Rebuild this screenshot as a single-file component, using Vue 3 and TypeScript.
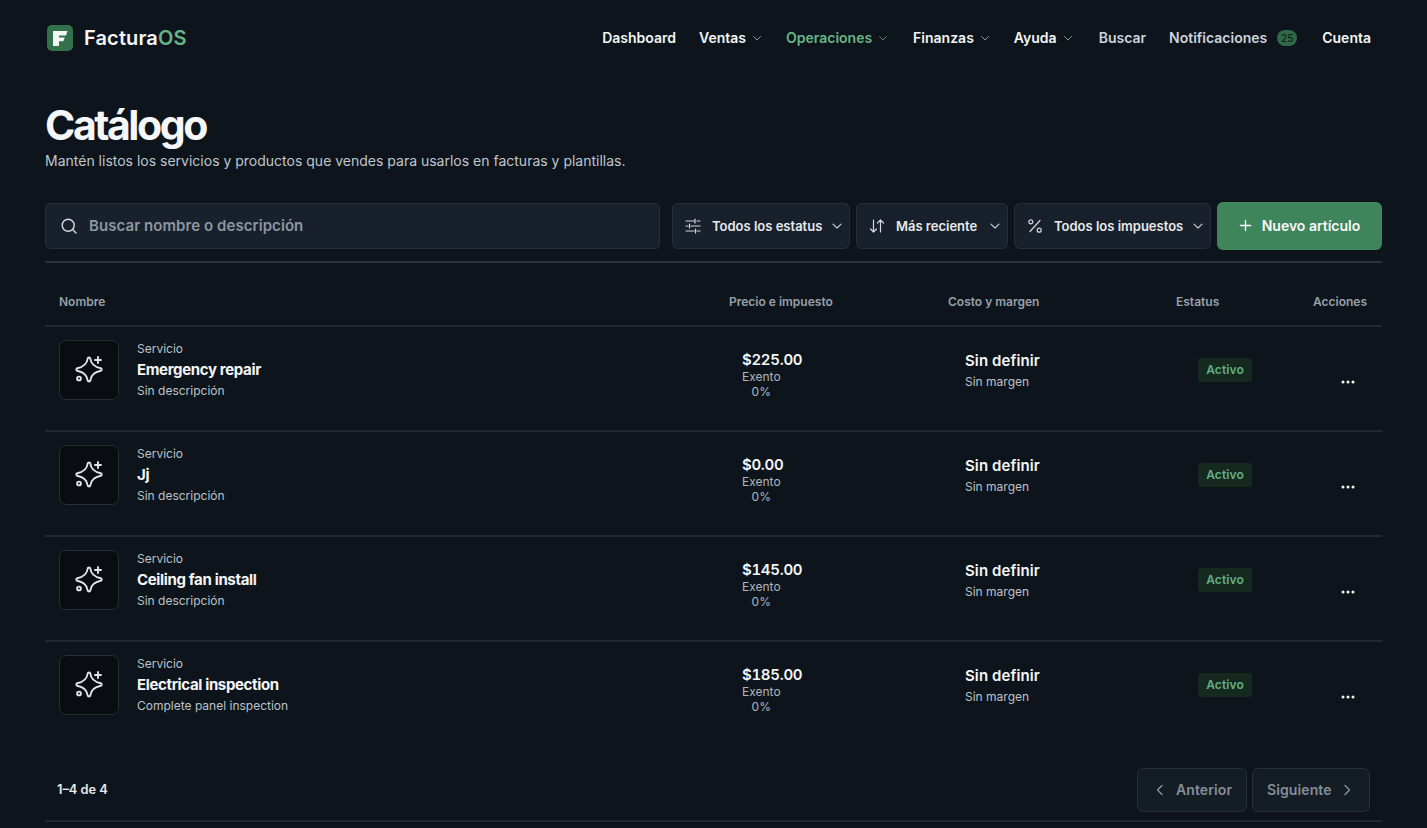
<script setup lang="ts">
interface Item { name: string; desc: string; price: string }
const items: Item[] = [
  { name: 'Emergency repair', desc: 'Sin descripción', price: '$225.00' },
  { name: 'Jj', desc: 'Sin descripción', price: '$0.00' },
  { name: 'Ceiling fan install', desc: 'Sin descripción', price: '$145.00' },
  { name: 'Electrical inspection', desc: 'Complete panel inspection', price: '$185.00' },
]
</script>

<template>
  <div class="page">
    <header class="nav">
      <div class="brand">
        <span class="logo">
          <svg width="20" height="20" viewBox="0 0 20 20"><path d="M3 3H17.500L16 7.500H9V9.500H14.800L13.300 13.300H9V18H3Z" fill="#f4f6f5"/></svg>
        </span>
        <span class="brand-text">Factura<em>OS</em></span>
      </div>
      <nav class="links">
        <a class="w">Dashboard</a>
        <a class="w"><span>Ventas</span><svg class="c c-v" viewBox="0 0 10 10"><path d="M1.500 3.500 5 7l3.500-3.500"/></svg></a>
        <a class="g"><span>Operaciones</span><svg class="c" viewBox="0 0 10 10"><path d="M1.500 3.500 5 7l3.500-3.500"/></svg></a>
        <a class="w"><span>Finanzas</span><svg class="c c-f" viewBox="0 0 10 10"><path d="M1.500 3.500 5 7l3.500-3.500"/></svg></a>
        <a class="w"><span>Ayuda</span><svg class="c c-a" viewBox="0 0 10 10"><path d="M1.500 3.500 5 7l3.500-3.500"/></svg></a>
        <a class="m">Buscar</a>
        <a class="m notif">Notificaciones<span class="pill">25</span></a>
        <a class="w cuenta">Cuenta</a>
      </nav>
    </header>

    <h1>Catálogo</h1>
    <p class="sub">Mantén listos los servicios y productos que vendes para usarlos en facturas y plantillas.</p>

    <div class="toolbar">
      <div class="search">
        <svg width="18" height="18" viewBox="0 0 18 18" fill="none" stroke="#d3d9df" stroke-width="1.400" stroke-linecap="round"><circle cx="8.200" cy="8.200" r="6"/><path d="m12.600 12.600 3.400 3.400"/></svg>
        <span>Buscar nombre o descripción</span>
      </div>
      <button class="sel s1">
        <svg class="ic" viewBox="0 0 16 16"><path d="M1 3h8M12 3h3M10 1v4M1 8h2M6 8h9M4.500 6v4M1 13h8M12 13h3M10.500 11v4"/></svg>
        <span class="lbl">Todos los estatus</span>
        <svg class="cs" viewBox="0 0 10 10"><path d="M1 3.200 5 7l4-3.800"/></svg>
      </button>
      <button class="sel s2">
        <svg class="ic" viewBox="0 0 16 16"><path d="M4.500 2v12M1.500 11l3 3 3-3M11.500 14V2M8.500 5l3-3 3 3"/></svg>
        <span class="lbl">Más reciente</span>
        <svg class="cs" viewBox="0 0 10 10"><path d="M1 3.200 5 7l4-3.800"/></svg>
      </button>
      <button class="sel s3">
        <svg class="ic" viewBox="0 0 16 16"><path d="M13 2.500 3 13.500"/><circle cx="3.800" cy="3.800" r="2"/><circle cx="12.200" cy="12.200" r="2"/></svg>
        <span class="lbl">Todos los impuestos</span>
        <svg class="cs" viewBox="0 0 10 10"><path d="M1 3.200 5 7l4-3.800"/></svg>
      </button>
      <button class="new">
        <svg width="13" height="13" viewBox="0 0 14 14" fill="none" stroke="#fff" stroke-width="1.500" stroke-linecap="round"><path d="M7 1.500v11M1.500 7h11"/></svg>
        Nuevo artículo
      </button>
    </div>

    <div class="grid head">
      <div>Nombre</div>
      <div>Precio e impuesto</div>
      <div>Costo y margen</div>
      <div>Estatus</div>
      <div class="right">Acciones</div>
    </div>

    <div v-for="it in items" :key="it.name" class="grid row">
      <div class="name-cell">
        <span class="thumb">
          <svg width="40" height="40" viewBox="0 0 40 40" fill="none" stroke="#e2e5e8" stroke-width="1.900" stroke-linecap="round" stroke-linejoin="round">
            <path d="M18.700 8.500C18.900 7.200 21.100 7.200 21.300 8.500C22 14.500 25.500 17 31.800 18.200C33 18.500 33 20.500 31.800 20.800C25.500 22 22 24.500 21.300 30.500C21.100 31.800 18.900 31.800 18.700 30.500C18 24.500 14.500 22 8.200 20.800C7 20.500 7 18.500 8.200 18.200C14.500 17 18 14.500 18.700 8.500Z"/>
            <path d="M29 7v6M26 10h6"/>
            <circle cx="10" cy="28.500" r="1.900"/>
          </svg>
        </span>
        <div class="name-text">
          <div class="small">Servicio</div>
          <div class="title">{{ it.name }}</div>
          <div class="small">{{ it.desc }}</div>
        </div>
      </div>
      <div class="price">
        <div class="strong amount">{{ it.price }}</div>
        <div class="tax"><div>Exento</div><div>0%</div></div>
      </div>
      <div class="cost">
        <div class="strong sd">Sin definir</div>
        <div class="small">Sin margen</div>
      </div>
      <div class="status"><span class="badge">Activo</span></div>
      <div class="actions">
        <svg width="14" height="4" viewBox="0 0 14 4" fill="#f2f4f5"><circle cx="2" cy="2" r="1.500"/><circle cx="7" cy="2" r="1.500"/><circle cx="12" cy="2" r="1.500"/></svg>
      </div>
    </div>

    <footer class="foot">
      <span class="count">1–4 de 4</span>
      <div class="pager">
        <button class="pg p1"><svg class="ch" viewBox="0 0 10 12"><path d="M7 1.500 2.500 6 7 10.500"/></svg>Anterior</button>
        <button class="pg p2">Siguiente<svg class="ch" viewBox="0 0 10 12"><path d="M3 1.500 7.500 6 3 10.500"/></svg></button>
      </div>
    </footer>
  </div>
</template>

<style>
html, body { margin: 0; background: #0d141b; }
</style>

<style scoped>
.page {
  height: 828px;
  box-sizing: border-box;
  padding: 0 45px;
  overflow: hidden;
  background: #0d141b;
  color: #f3f5f6;
  font-family: Inter, "Liberation Sans", sans-serif;
}
.nav { height: 75px; display: flex; align-items: center; justify-content: space-between; padding: 0 11px 0 2px; }
.brand { display: flex; align-items: center; gap: 11px; }
.logo { width: 26px; height: 26px; border-radius: 5px; background: #33704c; display: flex; align-items: center; justify-content: center; }
.brand-text { font-size: 20px; font-weight: 600; letter-spacing: 0.130px; color: #f3f5f6; }
.brand-text em { font-style: normal; color: #67b587; }
.links { display: flex; align-items: center; gap: 23px; font-size: 14px; font-weight: 600; }
.links a { display: flex; align-items: center; }
.w { color: #f2f4f5; }
.g { color: #67b587; }
.m { color: #cdd3da; }
.c { width: 10px; height: 10px; margin: 0 2px 0 6px; fill: none; stroke: #8f98a2; stroke-width: 1; stroke-linecap: round; stroke-linejoin: round; }
.c-v, .c-f { margin-right: 1px; }
.c-a { margin-right: 3px; }
.g .c { stroke: #4f8a68; }
.pill { margin-left: 10px; width: 20px; height: 16px; border-radius: 8px; background: #2f6a48; color: #0d1f16; font-size: 10px; font-weight: 500; display: flex; align-items: center; justify-content: center; }
.cuenta { margin-left: 2px; }
h1 { margin: 25px 0 0; font-size: 41px; line-height: 50px; font-weight: 700; letter-spacing: -2.450px; color: #f5f6f7; }
.sub { margin: 1px 0 0; font-size: 14px; line-height: 20px; color: #bfc6cd; }
.toolbar { margin-top: 31px; height: 61px; box-sizing: border-box; padding-bottom: 13px; display: flex; gap: 6px; border-bottom: 2px solid #2b3138; align-items: flex-start; }
.search { width: 615px; height: 46px; margin: 1px 6px 0 0; box-sizing: border-box; padding: 0 0 1px 14px; display: flex; align-items: center; gap: 11px; background: #18212b; border: 1px solid #262f39; border-radius: 5px; color: #8d96a2; font-size: 15px; font-weight: 600; letter-spacing: 0.070px; }
button { font-family: inherit; cursor: default; }
.sel { height: 46px; margin-top: 1px; box-sizing: border-box; padding: 0 7px 0 12px; display: flex; align-items: center; background: #18212b; border: 1px solid #262f39; border-radius: 6px; color: #e6e9ec; font-size: 13px; font-weight: 600; }
.lbl { margin-left: 11px; }
.s1 { width: 178px; }
.s2 { width: 152px; }
.s3 { width: 197px; }
.ic { width: 16px; height: 16px; flex: none; fill: none; stroke: #d3d8dd; stroke-width: 1.200; stroke-linecap: round; stroke-linejoin: round; }
.cs { width: 10px; height: 10px; flex: none; margin-left: auto; fill: none; stroke: #c8ced4; stroke-width: 1.100; stroke-linecap: round; stroke-linejoin: round; }
.new { width: 165px; height: 48px; border: 0; border-radius: 6px; background: #3f855c; color: #f7f9f8; font-size: 14px; font-weight: 600; display: flex; align-items: center; justify-content: center; gap: 10px; padding: 0 0 1px; }
.grid { display: grid; grid-template-columns: 670px 219px 228px 137px 83px; }
.head { height: 64px; align-items: center; border-bottom: 2px solid #22282f; box-sizing: border-box; padding-top: 14px; font-size: 12px; font-weight: 600; color: #98a0aa; }
.head > div { padding: 0 14px; }
.head .right { text-align: right; padding: 0 15px 0 0; }
.row { height: 105px; box-sizing: border-box; border-bottom: 2px solid #22282f; }
.row:last-of-type { border-bottom: 0; }
.name-cell { display: flex; padding: 13px 0 0 14px; gap: 18px; }
.thumb { width: 60px; height: 60px; box-sizing: border-box; border: 1px solid #272d34; border-radius: 7px; background: #090d12; display: flex; align-items: center; justify-content: center; }
.name-text { padding-top: 1px; }
.small { font-size: 12px; line-height: 16px; color: #bcc3ca; }
.title { font-size: 15px; line-height: 25px; margin: 0 0 1px; font-weight: 700; letter-spacing: -0.350px; color: #f5f6f7; }
.price { padding: 23px 0 0 27px; }
.strong { font-size: 15px; line-height: 20px; font-weight: 600; color: #f5f6f7; }
.amount { letter-spacing: -0.300px; margin-bottom: -1px; font-variant-numeric: tabular-nums; }
.tax { display: inline-block; text-align: center; font-size: 12px; line-height: 15px; color: #b0b7be; }
.cost { padding: 24px 0 0 31px; }
.sd { line-height: 20px; letter-spacing: 0.100px; margin-bottom: 2.500px; }
.status { padding: 31px 0 0 36px; }
.badge { display: inline-block; width: 54px; height: 24px; box-sizing: border-box; text-align: center; line-height: 24px; border-radius: 3px; background: #15291f; color: #62b085; font-size: 12px; font-weight: 600; letter-spacing: 0.100px; }
.actions { padding: 53px 0 0 42px; }
.actions svg { display: block; }
.foot { height: 75px; display: flex; justify-content: space-between; align-items: center; border-bottom: 2px solid #22282f; padding: 12px 12px 0; box-sizing: border-box; }
.count { font-size: 12.800px; font-weight: 600; color: #e6e9ec; }
.pager { display: flex; gap: 5px; }
.pg { height: 44px; box-sizing: border-box; background: #141c24; border: 1px solid #272f38; border-radius: 6px; color: #858e99; font-size: 14px; font-weight: 600; letter-spacing: 0.100px; display: flex; align-items: center; justify-content: flex-start; }
.p1 { width: 110px; padding: 0 0 0 17px; gap: 11px; }
.p2 { width: 118px; padding: 0 0 0 14px; gap: 10px; }
.ch { width: 10px; height: 12px; fill: none; stroke: #8d96a0; stroke-width: 1.400; stroke-linecap: round; stroke-linejoin: round; }
</style>
